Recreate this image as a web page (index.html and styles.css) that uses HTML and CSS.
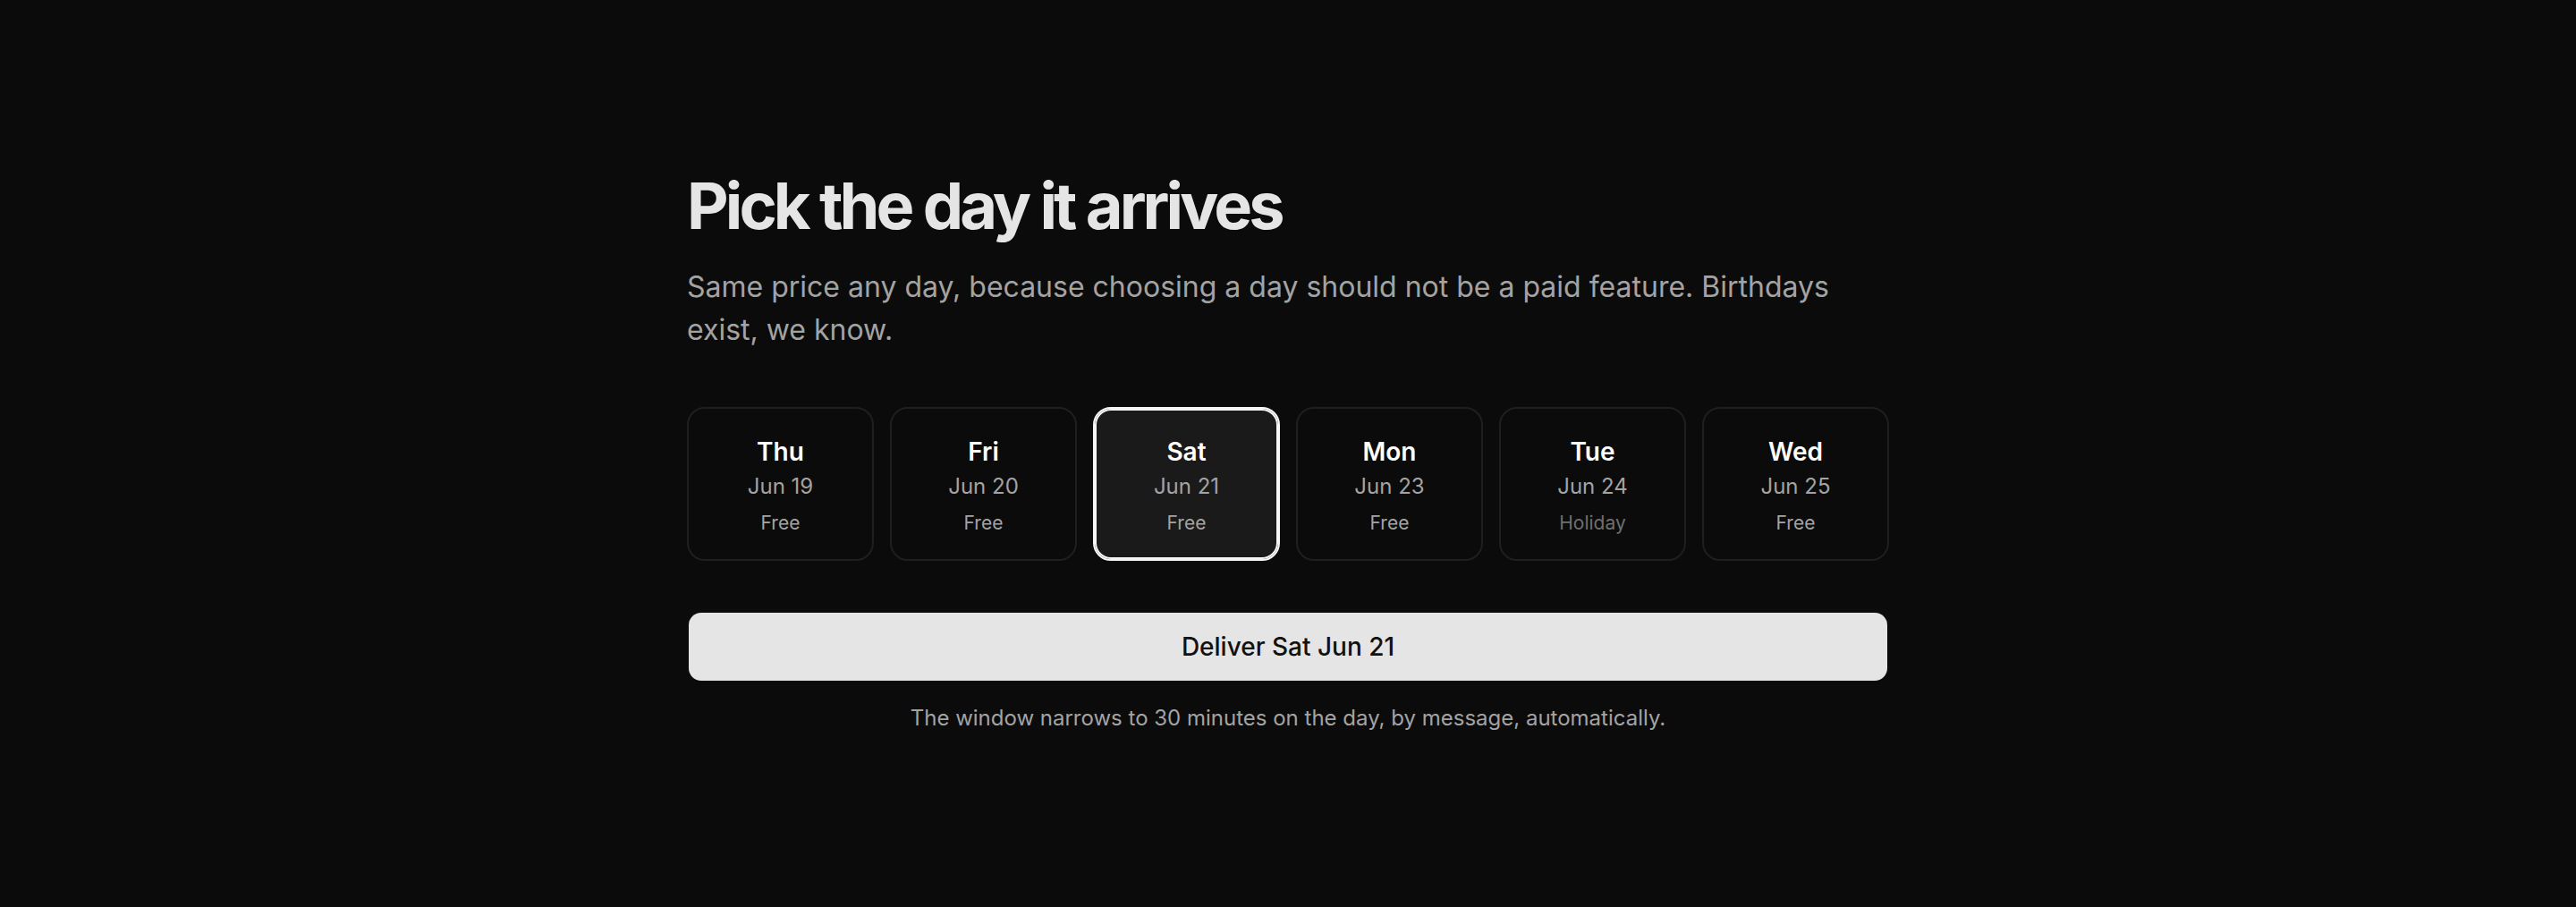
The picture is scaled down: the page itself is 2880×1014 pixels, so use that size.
FILE: index.html
```html
<!DOCTYPE html>
<html lang="en">
<head>
    <meta charset="UTF-8">
    <meta name="viewport" content="width=device-width, initial-scale=1.0">
    <title>Pick the day it arrives</title>
    <link rel="stylesheet" href="styles.css">
</head>
<body>

<main class="picker">
    <h1 class="title">Pick the day it arrives</h1>
    <p class="lead">Same price any day, because choosing a day should not be a paid feature. Birthdays exist, we know.</p>

    <div class="days">
        <div class="day">
            <span class="day-name">Thu</span>
            <span class="day-date">Jun 19</span>
            <span class="day-note">Free</span>
        </div>
        <div class="day">
            <span class="day-name">Fri</span>
            <span class="day-date">Jun 20</span>
            <span class="day-note">Free</span>
        </div>
        <div class="day selected">
            <span class="day-name">Sat</span>
            <span class="day-date">Jun 21</span>
            <span class="day-note">Free</span>
        </div>
        <div class="day">
            <span class="day-name">Mon</span>
            <span class="day-date">Jun 23</span>
            <span class="day-note">Free</span>
        </div>
        <div class="day">
            <span class="day-name">Tue</span>
            <span class="day-date">Jun 24</span>
            <span class="day-note holiday">Holiday</span>
        </div>
        <div class="day">
            <span class="day-name">Wed</span>
            <span class="day-date">Jun 25</span>
            <span class="day-note">Free</span>
        </div>
    </div>

    <button class="deliver">Deliver Sat Jun 21</button>
    <p class="footnote">The window narrows to 30 minutes on the day, by message, automatically.</p>
</main>

</body>
</html>
```

FILE: styles.css
```css
body {
    display: flex;
    justify-content: center;
    align-items: center;
    min-height: 100vh;
    margin: 0;
    background-color: #0b0b0b;
    font-family: Inter, "Noto Sans", sans-serif;
    color: #e5e5e5;
}
.picker {
    display: flex;
    flex-direction: column;
    width: 1344px;
    margin-top: -5px;
}
.title {
    margin: 0;
    font-size: 72px;
    line-height: 1.1;
    font-weight: 700;
    letter-spacing: -0.054em;
    color: #e5e5e5;
}
.lead {
    margin: 27px 0 0;
    font-size: 32px;
    line-height: 48px;
    color: #a3a3a3;
}
.days {
    display: flex;
    gap: 18px;
    margin-top: 62px;
}
.day {
    flex: 1;
    display: flex;
    flex-direction: column;
    align-items: center;
    padding: 30px 0 26px;
    border: 2px solid #1f1f1f;
    border-radius: 20px;
    background-color: #0b0b0b;
    cursor: pointer;
}
.day.selected {
    border-color: #f5f5f5;
    box-shadow: inset 0 0 0 2px #f5f5f5;
    background-color: #1a1a1a;
}
.day-name {
    font-size: 28px;
    line-height: 36px;
    font-weight: 600;
    color: #fff;
}
.day-date {
    margin-top: 4px;
    font-size: 24px;
    line-height: 34px;
    color: #a3a3a3;
}
.day-note {
    margin-top: 10px;
    font-size: 21px;
    line-height: 28px;
    color: #a3a3a3;
}
.day-note.holiday {
    color: #6f6f6f;
}
.deliver {
    margin: 58px 2px 0;
    height: 76px;
    border: none;
    border-radius: 14px;
    background-color: #e5e5e5;
    color: #111;
    font-family: inherit;
    font-size: 28px;
    font-weight: 500;
    cursor: pointer;
}
.footnote {
    margin: 26px 0 0;
    font-size: 24px;
    line-height: 32px;
    text-align: center;
    color: #a3a3a3;
}
```
